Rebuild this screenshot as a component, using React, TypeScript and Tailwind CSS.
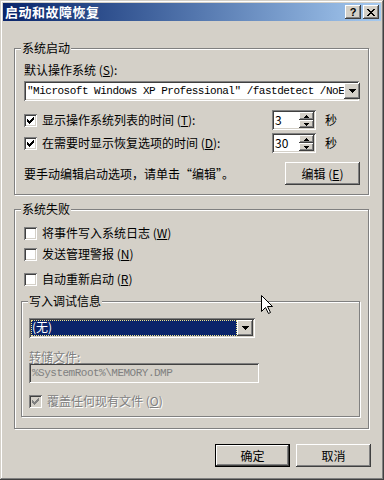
import React from "react";

const raised =
  "shadow-[inset_-1px_-1px_#404040,inset_1px_1px_#fff,inset_-2px_-2px_#808080,inset_2px_2px_#d4d0c8]";
const sunken =
  "shadow-[inset_1px_1px_#808080,inset_-1px_-1px_#fff,inset_2px_2px_#404040,inset_-2px_-2px_#d4d0c8]";
const etched = "border border-[#808080] shadow-[inset_1px_1px_0_#fff,1px_1px_0_#fff]";
const mono = "font-['Liberation_Mono',monospace] text-[11px] tracking-[-0.5px]";

const tick = ["......x", ".....xx", "x...xxx", "xx.xxx.", "xxxxx..", ".xxx...", "..x...."];

function CheckBox({ checked, disabled }: { checked?: boolean; disabled?: boolean }) {
  return (
    <span
      className={`w-[13px] h-[13px] shrink-0 flex items-center justify-center ${sunken} ${
        disabled ? "bg-[#d4d0c8]" : "bg-white"
      }`}
    >
      {checked && (
        <svg width="7" height="7" viewBox="0 0 7 7" shapeRendering="crispEdges">
          {tick.map((row, y) =>
            row.split("").map((c, x) =>
              c === "x" ? (
                <rect key={`${x}-${y}`} x={x} y={y} width="1" height="1" fill={disabled ? "#808080" : "#000"} />
              ) : null
            )
          )}
        </svg>
      )}
    </span>
  );
}

function Arrow({ up, small }: { up?: boolean; small?: boolean }) {
  const w = small ? 5 : 7;
  const h = small ? 3 : 4;
  return (
    <svg width={w} height={h} viewBox={`0 0 ${w} ${h}`} shapeRendering="crispEdges">
      {Array.from({ length: h }).map((_, i) => {
        const row = up ? h - 1 - i : i;
        return <rect key={i} x={i} y={row} width={w - i * 2} height="1" fill="#000" />;
      })}
    </svg>
  );
}

function DropButton() {
  return (
    <span className={`w-[16px] h-[16px] shrink-0 bg-[#d4d0c8] flex items-center justify-center ${raised}`}>
      <Arrow />
    </span>
  );
}

function Spin({ value }: { value: string }) {
  return (
    <div className={`w-[44px] h-[20px] bg-white flex p-[2px] ${sunken}`}>
      <div className="flex-1 pl-[1px] leading-[16px] text-[12px]">{value}</div>
      <div className="w-[15px] flex flex-col">
        <span className={`h-[8px] bg-[#d4d0c8] flex items-center justify-center ${raised}`}>
          <Arrow up small />
        </span>
        <span className={`h-[8px] bg-[#d4d0c8] flex items-center justify-center ${raised}`}>
          <Arrow small />
        </span>
      </div>
    </div>
  );
}

function Legend({ children }: { children: React.ReactNode }) {
  return (
    <span className="absolute top-[-9px] left-[6px] px-[1px] bg-[#d4d0c8] leading-[16px] text-[12px]">
      {children}
    </span>
  );
}

function CheckRow({
  label,
  keyChar,
  checked,
  className,
}: {
  label: string;
  keyChar: string;
  checked?: boolean;
  className?: string;
}) {
  return (
    <div className={`h-[16px] flex items-center gap-[5px] ${className ?? ""}`}>
      <CheckBox checked={checked} />
      <span className="leading-[16px] text-[12px] whitespace-nowrap">
        {label} (<u>{keyChar}</u>)
      </span>
    </div>
  );
}

export default function App() {
  return (
    <div className="relative w-[384px] h-[480px] bg-[#d4d0c8] p-[3px] flex flex-col text-black font-['Noto_Sans_CJK_SC',sans-serif] shadow-[inset_-1px_-1px_#404040,inset_1px_1px_#d4d0c8,inset_-2px_-2px_#808080,inset_2px_2px_#fff]">
      {/* Title bar */}
      <div className="h-[18px] shrink-0 flex items-center justify-between pl-[2px] pr-[2px] bg-gradient-to-r from-[#0a246a] to-[#a6caf0]">
        <span className="text-white font-bold text-[13px] tracking-[0.5px] leading-[18px]">启动和故障恢复</span>
        <div className="flex gap-[2px]">
          <span className={`w-[16px] h-[14px] bg-[#d4d0c8] flex items-center justify-center ${raised}`}>
            <span className="font-['Liberation_Sans',sans-serif] font-bold text-[11px] leading-[11px]">?</span>
          </span>
          <span className={`w-[16px] h-[14px] bg-[#d4d0c8] flex items-center justify-center ${raised}`}>
            <svg width="8" height="7" viewBox="0 0 8 7" shapeRendering="crispEdges">
              <path d="M0 0h2v1h-2zM6 0h2v1h-2zM1 1h2v1h-2zM5 1h2v1h-2zM2 2h4v1h-4zM3 3h2v1h-2zM2 4h4v1h-4zM1 5h2v1h-2zM5 5h2v1h-2zM0 6h2v1h-2zM6 6h2v1h-2z" fill="#000" />
            </svg>
          </span>
        </div>
      </div>

      <div className="pl-[11px] pr-[12px]">
        {/* 系统启动 */}
        <div className={`relative mt-[27px] h-[147px] pl-[9px] ${etched}`}>
          <Legend>系统启动</Legend>
          <div className="mt-[13px] h-[16px] leading-[16px] text-[12px]">
            默认操作系统 (<u>S</u>):
          </div>
          <div className={`mt-[3px] w-[335px] h-[20px] bg-white flex items-center p-[2px] ${sunken}`}>
            <span className={`flex-1 pl-[1px] whitespace-nowrap ${mono}`}>
              "Microsoft Windows XP Professional" /fastdetect /NoE
            </span>
            <DropButton />
          </div>

          <div className="mt-[9px] h-[20px] flex items-center">
            <div className="w-[248px] flex items-center gap-[5px]">
              <CheckBox checked />
              <span className="text-[12px] leading-[16px]">
                显示操作系统列表的时间 (<u>T</u>):
              </span>
            </div>
            <Spin value="3" />
            <span className="ml-[9px] text-[12px] leading-[16px]">秒</span>
          </div>

          <div className="mt-[3px] h-[20px] flex items-center">
            <div className="w-[248px] flex items-center gap-[5px]">
              <CheckBox checked />
              <span className="text-[12px] leading-[16px]">
                在需要时显示恢复选项的时间 (<u>D</u>):
              </span>
            </div>
            <Spin value="30" />
            <span className="ml-[9px] text-[12px] leading-[16px]">秒</span>
          </div>

          <div className="mt-[9px] h-[23px] flex items-center">
            <span className="w-[261px] text-[12px] leading-[16px]">要手动编辑启动选项，请单击“编辑”。</span>
            <button className={`w-[75px] h-[23px] bg-[#d4d0c8] text-[12px] leading-[16px] ${raised}`}>
              编辑 (<u>E</u>)
            </button>
          </div>
        </div>

        {/* 系统失败 */}
        <div className={`relative mt-[14px] h-[220px] pl-[9px] ${etched}`}>
          <Legend>系统失败</Legend>
          <CheckRow className="mt-[15px]" label="将事件写入系统日志" keyChar="W" />
          <CheckRow className="mt-[5px]" label="发送管理警报" keyChar="N" />
          <CheckRow className="mt-[9px]" label="自动重新启动" keyChar="R" />

          {/* 写入调试信息 */}
          <div className={`relative ml-[-3px] mt-[14px] w-[339px] h-[116px] pl-[7px] ${etched}`}>
            <Legend>写入调试信息</Legend>
            <div className={`mt-[16px] w-[226px] h-[20px] bg-white flex items-center p-[2px] ${sunken}`}>
              <span className="flex-1 h-[16px] bg-[#0a246a] text-white text-[12px] leading-[14px] pl-[1px] outline-1 outline-dotted outline-[#f0e68c] -outline-offset-1">
                (无)
              </span>
              <DropButton />
            </div>
            <div className="mt-[13px] h-[12px] leading-[12px] text-[12px] text-[#808080] [text-shadow:1px_1px_0_#fff]">
              转储文件:
            </div>
            <div className={`w-[230px] h-[20px] bg-[#d4d0c8] flex items-center px-[3px] ${sunken}`}>
              <span className={`text-[#808080] ${mono}`}>%SystemRoot%\MEMORY.DMP</span>
            </div>
            <div className="mt-[10px] h-[16px] flex items-center gap-[5px]">
              <CheckBox checked disabled />
              <span className="text-[12px] leading-[16px] text-[#808080] [text-shadow:1px_1px_0_#fff]">
                覆盖任何现有文件 (<u>O</u>)
              </span>
            </div>
          </div>
        </div>
      </div>

      {/* Buttons */}
      <div className="mt-[15px] flex justify-end gap-[6px] pr-[10px]">
        <button className="w-[75px] h-[23px] border border-black bg-[#d4d0c8]">
          <span className={`block w-full h-full text-[12px] leading-[21px] ${raised}`}>确定</span>
        </button>
        <button className={`w-[75px] h-[23px] bg-[#d4d0c8] text-[12px] leading-[16px] ${raised}`}>取消</button>
      </div>

      {/* Mouse pointer */}
      <svg className="absolute left-[261px] top-[295px]" width="13" height="20" viewBox="0 0 13 20">
        <path
          d="M0.5 0.5 L0.5 16.5 L4.5 12.5 L7.5 18.5 L9.5 17.5 L6.5 11.5 L11.5 11.5 Z"
          fill="#fff"
          stroke="#000"
          strokeWidth="1"
        />
      </svg>
    </div>
  );
}
